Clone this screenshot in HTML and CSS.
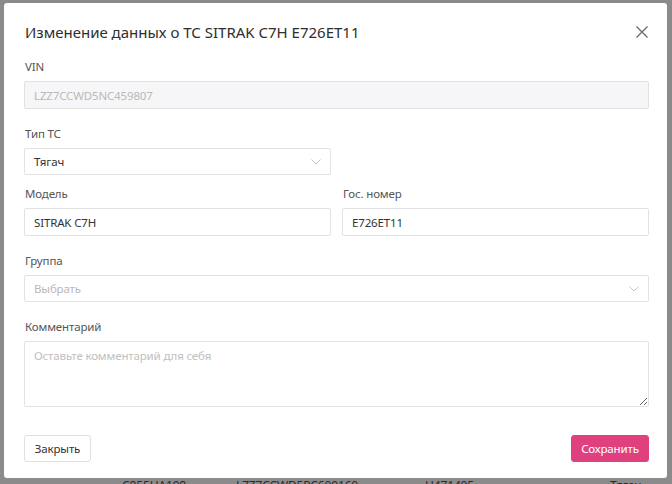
FILE: index.html
```html
<!DOCTYPE html>
<html lang="ru">
<head>
<meta charset="utf-8">
<title>Изменение данных о ТС</title>
<link rel="stylesheet" href="styles.css">
</head>
<body>
<div class="page">
  <div class="bg-row">
    <span class="c1">С855НА198</span>
    <span class="c2">LZZ7CCWD5PC609160</span>
    <span class="c3">Н471405</span>
    <span class="c4">Тягач</span>
  </div>
</div>
<div class="modal">
  <div class="modal-header">
    <h1 class="modal-title">Изменение данных о ТС SITRAK C7H E726ET11</h1>
    <button class="close-btn" aria-label="Закрыть">
      <svg width="12" height="12" viewBox="0 0 12 12"><path d="M0.5 0.5L11.5 11.5M11.5 0.5L0.5 11.5" stroke="#666" stroke-width="1.2" fill="none"/></svg>
    </button>
  </div>
  <div class="modal-body">
    <div class="field">
      <label class="label">VIN</label>
      <div class="input disabled">LZZ7CCWD5NC459807</div>
    </div>
    <div class="field half tight">
      <label class="label">Тип ТС</label>
      <div class="input select">
        <span>Тягач</span>
        <svg class="chev" width="10" height="6" viewBox="0 0 10 6"><path d="M0.5 0.5L5 5L9.5 0.5" stroke="#c4c4c4" stroke-width="1" fill="none"/></svg>
      </div>
    </div>
    <div class="row field">
      <div class="col">
        <label class="label">Модель</label>
        <div class="input">SITRAK C7H</div>
      </div>
      <div class="col">
        <label class="label">Гос. номер</label>
        <div class="input">E726ET11</div>
      </div>
    </div>
    <div class="field">
      <label class="label">Группа</label>
      <div class="input select">
        <span class="placeholder">Выбрать</span>
        <svg class="chev" width="10" height="6" viewBox="0 0 10 6"><path d="M0.5 0.5L5 5L9.5 0.5" stroke="#c4c4c4" stroke-width="1" fill="none"/></svg>
      </div>
    </div>
    <div class="field last">
      <label class="label">Комментарий</label>
      <textarea class="textarea" placeholder="Оставьте комментарий для себя"></textarea>
    </div>
  </div>
  <div class="modal-footer">
    <button class="btn btn-default">Закрыть</button>
    <button class="btn btn-primary">Сохранить</button>
  </div>
</div>
</body>
</html>
```
FILE: styles.css
```css
* { box-sizing: border-box; }
html, body { margin: 0; padding: 0; }
body {
  width: 672px;
  height: 484px;
  overflow: hidden;
  background: #8b8b8b;
  font-family: "Noto Sans", "Open Sans", sans-serif;
  color: #333;
  position: relative;
}
.page { padding-top: 476px; }
.bg-row {
  display: grid;
  grid-template-columns: 122px 114px 189px 185px auto;
  font-size: 12px;
  line-height: 20px;
  letter-spacing: -0.15px;
  color: #2b2b2b;
}
.bg-row .c1 { grid-column: 2; }
.bg-row .c2 { grid-column: 3; }
.bg-row .c3 { grid-column: 4; }
.bg-row .c4 { grid-column: 5; }

.modal {
  position: absolute;
  left: 4px;
  top: 3px;
  width: 663px;
  height: 475px;
  background: #fff;
  border-radius: 3px;
  padding: 16px 18px 16px 20px;
  display: flex;
  flex-direction: column;
}
.modal-header {
  display: flex;
  align-items: center;
  justify-content: space-between;
  height: 25px;
  margin-bottom: 13px;
}
.modal-title {
  margin: 0;
  font-size: 15px;
  font-weight: 400;
  color: #2e2e2e;
  padding-left: 1px;
}
.close-btn {
  border: 0;
  background: none;
  padding: 0;
  margin-right: 1px;
  width: 12px;
  height: 12px;
  display: flex;
  cursor: pointer;
}
.modal-body { display: flex; flex-direction: column; }
.field { display: flex; flex-direction: column; margin-bottom: 15px; }
.field.tight { margin-bottom: 9px; }
.field.last { margin-bottom: 0; }
.field.half { width: 307px; }
.row {
  display: grid;
  grid-template-columns: 307px 307px;
  column-gap: 11px;
}
.col { display: flex; flex-direction: column; }
.label {
  font-size: 11.5px;
  letter-spacing: -0.15px;
  line-height: 20px;
  margin-bottom: 4px;
  color: #555;
  padding-left: 1px;
}
.input {
  height: 28px;
  border: 1px solid #e2e2e2;
  border-radius: 2px;
  padding: 0 9px;
  font-size: 11.5px;
  letter-spacing: -0.15px;
  display: flex;
  align-items: center;
  color: #333;
  background: #fff;
}
.input.disabled { background: #f6f6f8; color: #b9b9b9; }
.select { justify-content: space-between; height: 27px; }
.placeholder { color: #b9b9b9; }
.textarea {
  height: 66px;
  border: 1px solid #e2e2e2;
  border-radius: 2px;
  padding: 6px 9px;
  font-family: inherit;
  font-size: 11.5px;
  letter-spacing: -0.15px;
  color: #333;
  resize: vertical;
  outline: none;
}
.textarea::placeholder { color: #c0c0c0; }
.modal-footer {
  margin-top: auto;
  display: flex;
  justify-content: space-between;
}
.btn {
  height: 27px;
  border-radius: 3px;
  font-family: inherit;
  font-size: 11.5px;
  letter-spacing: -0.15px;
  padding: 0;
  cursor: pointer;
}
.btn-default {
  background: #fff;
  border: 1px solid #e0e0e0;
  color: #333;
  width: 67px;
}
.btn-primary {
  background: #e1407f;
  border: 1px solid #e1407f;
  color: #fff;
  width: 78px;
}
```
